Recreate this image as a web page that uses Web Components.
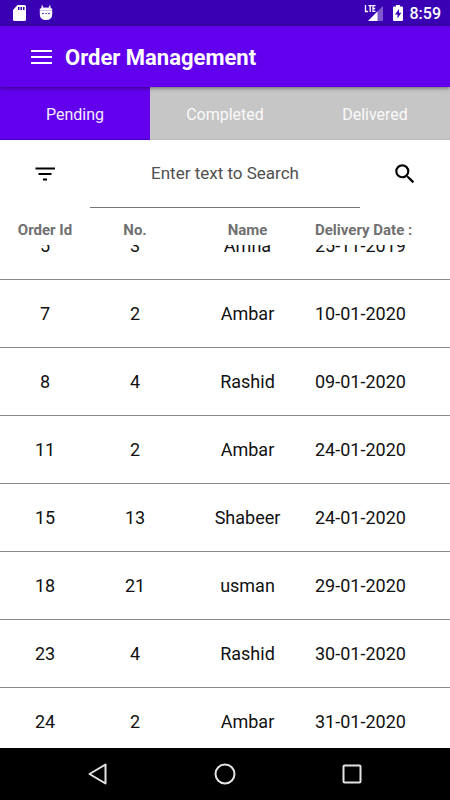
<!DOCTYPE html>
<html lang="en">
<head>
<meta charset="utf-8">
<meta name="viewport" content="width=device-width, initial-scale=1">
<title>Order Management</title>
<style>
html, body { height: 100%; margin: 0; }
body { font-family: Roboto, "Noto Sans", sans-serif; background: #fff; color: #111; }
</style>
</head>
<body>
<order-app></order-app>

<script>
const define = (name, html, setup) => {
  const template = document.createElement('template');
  template.innerHTML = html;
  customElements.define(name, class extends HTMLElement {
    constructor() {
      super();
      this.attachShadow({ mode: 'open' }).append(template.content.cloneNode(true));
    }
    connectedCallback() { if (setup) setup(this, this.shadowRoot); }
  });
};

define('status-bar', `
<style>
:host { display: flex; align-items: center; justify-content: space-between; height: 26px; padding: 0 9px 0 12px; background: #3a00b3; color: #fff; }
div { display: flex; align-items: center; }
.left { gap: 13px; }
svg { display: block; }
.signal { margin-right: 9px; }
.battery { margin-right: 7px; }
time { font-size: 16px; line-height: 24px; font-weight: 500; padding-top: 2px; }
</style>
<div class="left">
  <svg width="14" height="18" viewBox="0 0 14 18" fill="#fff"><path d="M5.500 1H12.500Q14 1 14 2.500V15.500Q14 17 12.500 17H2.500Q1 17 1 15.500V6Z"/><path d="M6 3h1.500v3H6zM8.500 3H10v3H8.500zM11 3h1.500v3H11z" fill="#3a00b3"/></svg>
  <svg width="14" height="18" viewBox="0 0 14 18" fill="#fff"><path d="M3 .5L4.500 3.800Q7 3 9.500 3.800L11 .5L11.800 4.500H13.200V10Q13.200 16 7 16Q.8 16 .8 10V4.500H2.200Z"/><g fill="#3a00b3"><path d="M.8 6.500h12.400v.5H.8z" opacity=".45"/><circle cx="4" cy="9.500" r=".8"/><circle cx="10" cy="9.500" r=".8"/><path d="M6.200 9h1.600v.8H6.200z"/></g></svg>
</div>
<div>
  <svg class="signal" width="20" height="18" viewBox="0 0 20 18"><path d="M19 2V17H4Z" fill="#fff" opacity=".35"/><path d="M13.500 7.500V17H4Z" fill="#fff"/><path d="M0 0H12V9H0Z" fill="#3a00b3"/><path d="M1.500 1V7.500H4M4.500 1.700H8M6.200 1V8M11.500 1.700H9V7.300H11.500M9 4.500H11.200" fill="none" stroke="#fff" stroke-width="1.300"/></svg>
  <svg class="battery" width="10" height="18" viewBox="0 0 10 18"><path d="M3 1H7V2.500H9Q10 2.500 10 3.500V16Q10 17 9 17H1Q0 17 0 16V3.500Q0 2.500 1 2.500H3Z" fill="#fff"/><path d="M6 5L2 10.500H4.500V14.500L8.300 8.800H6Z" fill="#3a00b3"/></svg>
  <time>8:59</time>
</div>`);

define('app-bar', `
<style>
:host { display: flex; align-items: center; gap: 11px; height: 61px; padding: 0 28px; background: #6200ee; color: #fff; position: relative; z-index: 2; box-shadow: 0 1px 4px rgba(0,0,0,.5); }
button { all: unset; display: block; cursor: pointer; }
svg { display: block; }
h1 { margin: 0; font-size: 22px; line-height: 32px; font-weight: 700; padding-top: 3px; }
</style>
<button aria-label="Open menu"><svg width="26" height="26" viewBox="0 0 26 26"><path d="M3 7H24M3 13H24M3 19H24" stroke="#fff" stroke-width="2.200"/></svg></button>
<h1><slot></slot></h1>`);

define('order-tabs', `
<style>
:host { display: grid; grid-template-columns: repeat(3, 1fr); }
::slotted(button) { height: 53px; border: 0; border-bottom: 1px solid #bbb; padding: 3px 0 0; background: #c6c6c6; color: #fafafa; font: 400 16px/20px Roboto, "Noto Sans", sans-serif; }
::slotted(button[aria-selected="true"]) { background: #6200ee; border-color: #4a00c8; color: #f4edff; }
</style>
<slot></slot>`);

define('search-row', `
<style>
:host { display: grid; grid-template-columns: 1fr 3fr 1fr; height: 68px; }
button { all: unset; display: flex; justify-content: center; align-items: center; cursor: pointer; }
svg { display: block; }
input { min-width: 0; box-sizing: border-box; border: 0; border-bottom: 1px solid #777; border-radius: 0; outline: 0; background: none; padding: 0 0 2px; text-align: center; font: 400 17px/24px Roboto, "Noto Sans", sans-serif; color: #222; }
input::placeholder { color: #505050; opacity: 1; }
</style>
<button aria-label="Filter"><svg width="24" height="24" viewBox="0 0 24 24"><path d="M2.500 6.500H22M5.500 12H18.500M10 17.500H14" stroke="#000" stroke-width="2" fill="none"/></svg></button>
<input type="text" aria-label="Search orders" placeholder="Enter text to Search">
<button aria-label="Search"><svg width="26" height="26" viewBox="0 0 24 24"><path d="M15.500 14h-.79l-.28-.27A6.471 6.471 0 0 0 16 9.500 6.500 6.500 0 1 0 9.500 16c1.610 0 3.090-.59 4.230-1.570l.27.280v.79l5 4.990L20.490 19l-4.990-5zm-6 0C7.010 14 5 11.990 5 9.500S7.010 5 9.500 5 14 7.010 14 9.500 11.990 14 9.500 14z"/></svg></button>`);

const orders = [
  [5, 3, 'Amna', '25-11-2019'],
  [7, 2, 'Ambar', '10-01-2020'],
  [8, 4, 'Rashid', '09-01-2020'],
  [11, 2, 'Ambar', '24-01-2020'],
  [15, 13, 'Shabeer', '24-01-2020'],
  [18, 21, 'usman', '29-01-2020'],
  [23, 4, 'Rashid', '30-01-2020'],
  [24, 2, 'Ambar', '31-01-2020']
];

define('order-table', `
<style>
:host { display: block; flex: 1; min-height: 0; overflow-y: auto; scrollbar-width: none; }
table { width: 100%; table-layout: fixed; border-collapse: separate; border-spacing: 0; }
.narrow { width: 20%; }
.wide { width: 30%; }
th, td { padding: 0; text-align: center; vertical-align: middle; box-sizing: border-box; }
th { position: sticky; top: 0; height: 37px; background: #fff; color: #707070; font-size: 15px; line-height: 20px; font-weight: 700; padding-top: 7px; }
td { height: 68px; font-size: 18px; line-height: 24px; border-bottom: 1px solid #888; }
th:last-child, td:last-child { text-align: left; }
</style>
<table>
  <colgroup><col class="narrow"><col class="narrow"><col class="wide"><col class="wide"></colgroup>
  <thead><tr><th scope="col">Order Id</th><th scope="col">No.</th><th scope="col">Name</th><th scope="col">Delivery Date :</th></tr></thead>
  <tbody></tbody>
</table>`, (host, root) => {
  const body = root.querySelector('tbody');
  body.replaceChildren();
  for (const order of orders) {
    const row = body.insertRow();
    for (const value of order) row.insertCell().textContent = value;
  }
});

define('nav-bar', `
<style>
:host { display: flex; justify-content: center; align-items: center; gap: 101px; height: 52px; background: #000; }
button { all: unset; display: block; cursor: pointer; }
svg { display: block; fill: none; stroke: #e4e4e4; stroke-width: 2; stroke-linejoin: round; }
</style>
<button aria-label="Back"><svg width="26" height="26" viewBox="0 0 26 26"><path d="M20.500 3.500V22.500L4.500 13Z"/></svg></button>
<button aria-label="Home"><svg width="26" height="26" viewBox="0 0 26 26"><circle cx="13" cy="13" r="9.500"/></svg></button>
<button aria-label="Recent apps"><svg width="26" height="26" viewBox="0 0 26 26"><rect x="4.500" y="4.500" width="17" height="17" rx="1"/></svg></button>`);

define('order-app', `
<style>
:host { display: flex; flex-direction: column; height: 100%; }
</style>
<status-bar></status-bar>
<app-bar>Order Management</app-bar>
<order-tabs role="tablist">
  <button role="tab" aria-selected="true">Pending</button>
  <button role="tab" aria-selected="false">Completed</button>
  <button role="tab" aria-selected="false">Delivered</button>
</order-tabs>
<search-row></search-row>
<order-table></order-table>
<nav-bar></nav-bar>`);

document.querySelector('order-app').shadowRoot.querySelector('order-table').scrollTop = 33;
</script>
</body>
</html>
